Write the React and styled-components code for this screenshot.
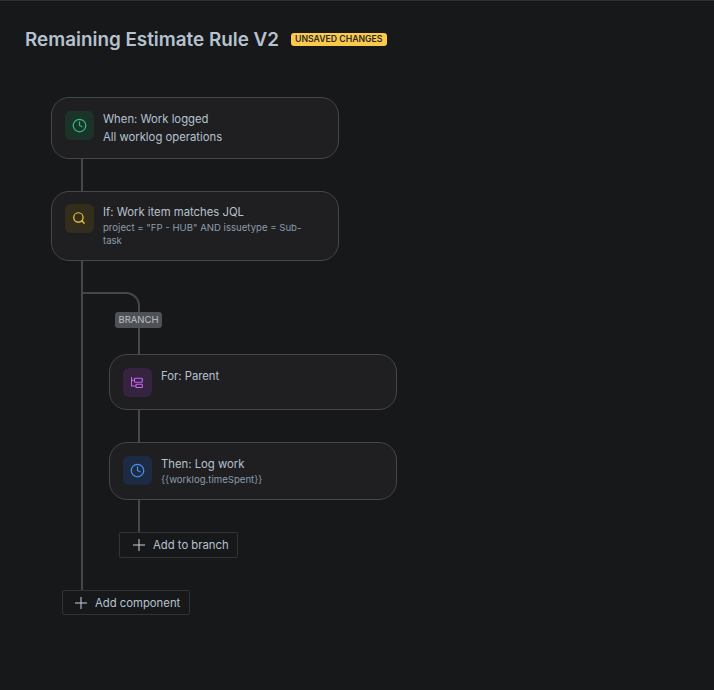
import React from "react";
import styled, { createGlobalStyle } from "styled-components";
import { Clock, Search } from "lucide-react";

const Global = createGlobalStyle`
  html, body { margin: 0; padding: 0; background: #17181a; }
  * { box-sizing: border-box; }
`;
const Page = styled.div`
  width: 714px; height: 690px; overflow: hidden; background: #17181a;
  border-top: 1px solid #2e2f32;
  font-family: Inter, "Noto Sans", sans-serif; color: #b6c2cf;
`;
const Header = styled.header`
  display: flex; align-items: flex-start; gap: 12px; padding: 25px 0 0 25px; height: 96px;
`;
const Title = styled.h1`
  margin: 0; font-size: 18.85px; line-height: 28px; font-weight: 600; color: #b6c2cf;
`;
const Badge = styled.span`
  margin-top: 7px; height: 13px; padding: 0 4px; border-radius: 3px; background: #fcc94a; color: #292a2e;
  font-size: 8.7px; line-height: 13px; font-weight: 600; white-space: nowrap;
`;
const Flow = styled.main`
  display: flex; flex-direction: column; align-items: flex-start; padding-left: 51px;
`;
const Card = styled.article`
  display: flex; gap: 9.2px; width: 288px; height: ${p => p.$h}px;
  padding: ${p => p.$top ?? 13}px 24px 0 13px;
  background: #1f1f21; border: 1px solid #46474a; border-radius: 18px;
`;
const IconBox = styled.div`
  flex: none; width: 28.8px; height: 28.8px; border-radius: 6px; display: flex; align-items: center; justify-content: center;
  background: ${p => p.$bg}; color: ${p => p.$fg};
`;
const Body = styled.div`
  min-width: 0;
`;
const Name = styled.div`
  font-size: 11.3px; line-height: 16px; color: #b6c2cf;
`;
const Detail = styled.div`
  margin-top: ${p => p.$gap || 0}px; font-size: ${p => p.$size || 9.6}px; line-height: ${p => p.$lh || 13}px; color: ${p => p.$color || "#8c9bab"};
`;
const Stem = styled.div`
  width: 2px; height: ${p => p.$h}px; margin-left: ${p => p.$left}px; background: #46474a;
`;
const Rail = styled.section`
  display: flex; flex-direction: column; align-items: flex-start; margin-left: 30px; padding-top: 31px;
  border-left: 2px solid #46474a; height: 329px;
`;
const Elbow = styled.div`
  position: relative; flex: none; width: 57px; height: 62px; border-top: 2px solid #46474a; border-right: 2px solid #46474a; border-top-right-radius: 14px;
`;
const BranchTag = styled.span`
  position: absolute; left: 32px; top: 18px; width: 47px; height: 16px; border-radius: 3px; background: #505155; color: #b6c2cf;
  font-size: 9.5px; line-height: 16px; text-align: center;
`;
const Branch = styled.div`
  display: flex; flex-direction: column; align-items: flex-start; margin-left: 26px;
`;
const AddButton = styled.button`
  display: flex; align-items: center; gap: ${p => p.$gap}px; height: ${p => p.$h}px; width: ${p => p.$w}px; padding: 0 0 0 ${p => p.$pad}px;
  margin-left: ${p => p.$left}px; background: #17181a; border: 1px solid #323336; border-radius: 2px; color: #b6c2cf;
  font-family: inherit; font-size: 11.3px; font-weight: 400;
`;
const PlusIcon = () => (
  <svg width="12" height="12" viewBox="0 0 12 12" fill="none" stroke="#c7d1db" strokeWidth="1">
    <path d="M0 6h12M6 0v12" />
  </svg>
);
const ParentIcon = () => (
  <svg width="12" height="11" viewBox="0 0 12 11" fill="none" stroke="currentColor" strokeWidth="1.1">
    <path d="M0.5 0v9h4.5M0.5 3.3h3" />
    <rect x="3.5" y="1.3" width="7.8" height="4" rx="0.6" />
    <rect x="5" y="7.3" width="6.3" height="3.3" rx="0.6" />
  </svg>
);

export default function App() {
  return (
    <Page>
      <Global />
      <Header>
        <Title>Remaining Estimate Rule V2</Title>
        <Badge>UNSAVED CHANGES</Badge>
      </Header>
      <Flow>
        <Card $h={62}>
          <IconBox $bg="#1c3329" $fg="#2abb7f"><Clock size={15} strokeWidth={2} /></IconBox>
          <Body>
            <Name>When: Work logged</Name>
            <Detail $gap={2} $size={11.3} $lh={16} $color="#b6c2cf">All worklog operations</Detail>
          </Body>
        </Card>
        <Stem $h={32} $left={30} />
        <Card $h={70} $top={12}>
          <IconBox $bg="#332e1b" $fg="#f5cd47"><Search size={14} strokeWidth={2} /></IconBox>
          <Body>
            <Name>If: Work item matches JQL</Name>
            <Detail $gap={1}>project = "FP - HUB" AND issuetype = Sub-task</Detail>
          </Body>
        </Card>
        <Rail>
          <Elbow><BranchTag>BRANCH</BranchTag></Elbow>
          <Branch>
            <Card $h={56}>
              <IconBox $bg="#35233f" $fg="#c466f0"><ParentIcon /></IconBox>
              <Body><Name>For: Parent</Name></Body>
            </Card>
            <Stem $h={32} $left={29} />
            <Card $h={58}>
              <IconBox $bg="#1c2b42" $fg="#4c8fe8"><Clock size={15} strokeWidth={2} /></IconBox>
              <Body>
                <Name>Then: Log work</Name>
                <Detail $gap={1}>{"{{worklog.timeSpent}}"}</Detail>
              </Body>
            </Card>
            <Stem $h={32} $left={29} />
            <AddButton $w={119} $h={26} $pad={13} $gap={8} $left={10}>
              <PlusIcon />Add to branch
            </AddButton>
          </Branch>
        </Rail>
        <AddButton $w={128} $h={25} $pad={12} $gap={8} $left={11}>
          <PlusIcon />Add component
        </AddButton>
      </Flow>
    </Page>
  );
}
